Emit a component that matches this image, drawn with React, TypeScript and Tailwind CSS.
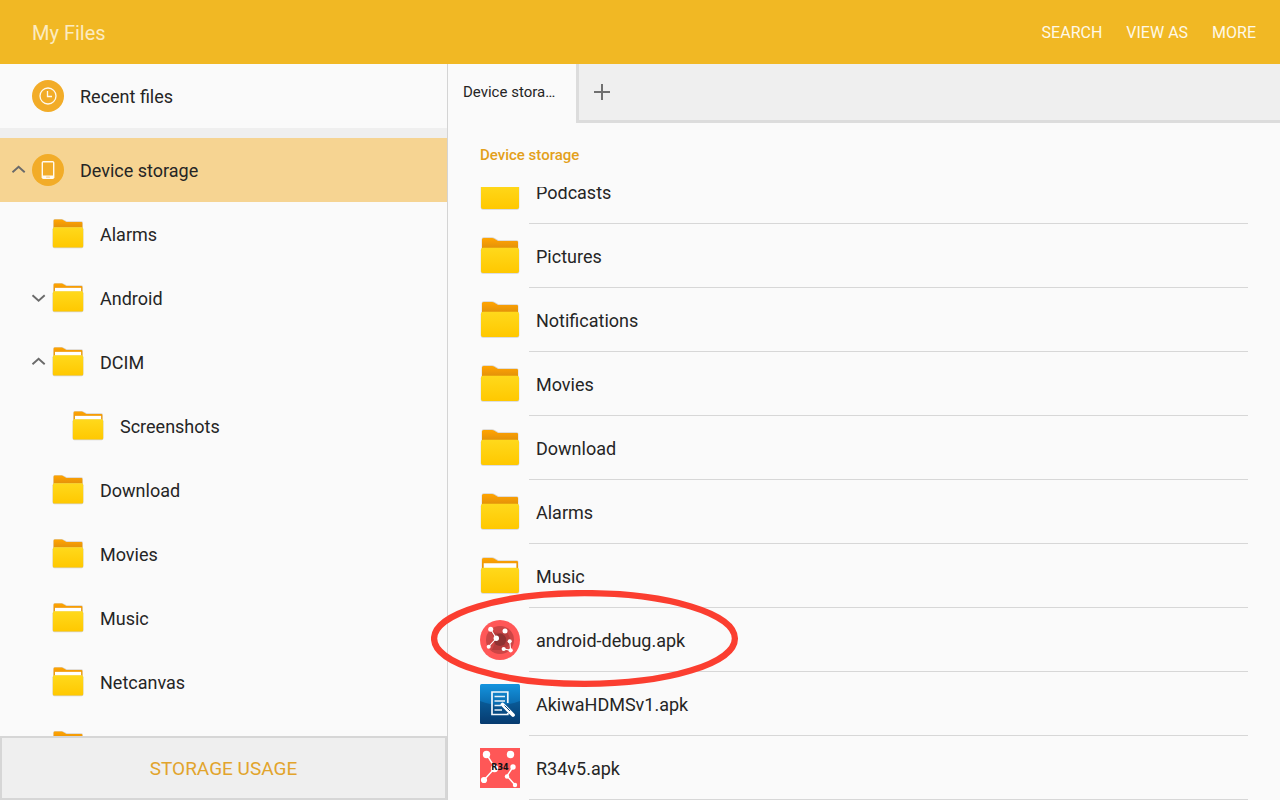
import { useLayoutEffect, useRef, type ReactNode } from "react";

type FolderKind = "plain" | "filled";

function FolderIcon({ kind, className }: { kind: FolderKind; className: string }) {
  return (
    <svg viewBox="0 0 40 40" className={className} aria-hidden="true">
      <defs>
        <linearGradient id="folderFront" x1="0" y1="0" x2="0" y2="1">
          <stop offset="0" stopColor="#ffd91c" />
          <stop offset="1" stopColor="#ffc800" />
        </linearGradient>
        <linearGradient id="folderBack" x1="0" y1="0" x2="0" y2="1">
          <stop offset="0" stopColor="#ffa500" />
          <stop offset="0.3" stopColor="#f79d04" />
          <stop offset="0.8" stopColor="#e4930a" />
        </linearGradient>
      </defs>
      <path d="M1.600 14V3.300Q1.600 1.300 3.600 1.300H12q1.500 0 2.600.8L18.500 4.200H36.800q1.600 0 1.600 1.600V14Z" fill="#d9d4cc" />
      <path d="M2 14V3.500Q2 1.900 3.600 1.900H12q1.300 0 2.300.8L18 4.900H36.800q1.200 0 1.200 1.200V14Z" fill="url(#folderBack)" />
      {kind === "filled" && <path d="M3.700 7.300H36.400V13H3.700Z" fill="#ffffff" />}
      <rect x="0.700" y="12" width="38.600" height="25.800" rx="2.200" fill="#d3d3d6" />
      <rect x="1" y="11.700" width="38" height="25.300" rx="2" fill="url(#folderFront)" />
    </svg>
  );
}

function ClockBadge() {
  return (
    <svg viewBox="0 0 32 32" className="size-8 shrink-0" fill="none" aria-hidden="true">
      <circle cx="16" cy="16" r="16" fill="#f2ac28" />
      <circle cx="16" cy="16" r="8" stroke="#fffaf0" strokeWidth="1.300" />
      <path d="M15.500 11V16.500H20" stroke="#fffaf0" strokeWidth="1.300" />
    </svg>
  );
}

function DeviceBadge() {
  return (
    <svg viewBox="0 0 32 32" className="size-8 shrink-0" aria-hidden="true">
      <circle cx="16" cy="16" r="16" fill="#f2ac28" />
      <rect x="9.600" y="7" width="12.800" height="18" rx="1.800" fill="#fffaf0" />
      <rect x="11" y="8.500" width="10" height="13" fill="#f2ac28" />
      <rect x="14" y="22.500" width="4" height="1.300" rx="0.600" fill="#f8d596" />
    </svg>
  );
}

function Chevron({ open }: { open: boolean }) {
  return (
    <svg viewBox="0 0 16 16" className="size-4" fill="none" stroke="#6a6a6a" strokeWidth="1.900" aria-hidden="true">
      <path d={open ? "M2.500 10.200 8.600 4.700 14.700 10.200" : "M2.500 5.200 8.600 10.700 14.700 5.200"} />
    </svg>
  );
}

function GraphIcon() {
  return (
    <svg viewBox="0 0 40 40" className="size-10 shrink-0" aria-hidden="true">
      <circle cx="20" cy="20" r="20" fill="#ff5757" />
      <circle cx="20" cy="20" r="14" fill="#cc4545" />
      <path d="M11 12 20 13 27 12 32 22 24 30 12 30 16 20Z" fill="#b53d3d" />
      <circle cx="20" cy="19.800" r="6.200" fill="#8e3232" />
      <path d="M10.700 9.300 16.300 18.300 8.700 26.700M29.700 21.300 30.700 30.300 23.700 29" fill="none" stroke="#ffffff" strokeWidth="1.100" />
      <g fill="#ffffff">
        <circle cx="10.700" cy="9.300" r="2.500" />
        <circle cx="25" cy="11" r="2.500" />
        <circle cx="16.300" cy="18.300" r="2.700" />
        <circle cx="8.700" cy="26.700" r="2" />
        <circle cx="29.700" cy="21.300" r="2.100" />
        <circle cx="23.700" cy="29" r="2.100" />
        <circle cx="30.700" cy="30.300" r="2.100" />
      </g>
    </svg>
  );
}

function DocumentIcon() {
  return (
    <svg viewBox="0 0 40 40" className="size-10 shrink-0" fill="none" aria-hidden="true">
      <defs>
        <linearGradient id="docBase" x1="0" y1="0" x2="0" y2="1">
          <stop offset="0" stopColor="#1494de" />
          <stop offset="0.500" stopColor="#0b6cb0" />
          <stop offset="1" stopColor="#08407a" />
        </linearGradient>
      </defs>
      <rect width="40" height="40" rx="1.500" fill="url(#docBase)" />
      <path d="M0 17Q20 25 40 17V38.500Q40 40 38.500 40H1.500Q0 40 0 38.500Z" fill="#06305c" opacity="0.350" />
      <path d="M27.800 19V8H12V30.500H27.800V29" stroke="#f2f7fb" strokeWidth="1.700" />
      <path d="M14.500 12.500H25M14.500 17H25M14.500 21.500H21M14.500 26H22" stroke="#e8f1f8" strokeWidth="1.500" />
      <path d="M22.500 20.500 33 31" stroke="#ffffff" strokeWidth="3.800" strokeLinecap="round" />
      <path d="M24.500 21.500 30 27" stroke="#0b4f87" strokeWidth="1" />
    </svg>
  );
}

function R34Icon() {
  return (
    <svg viewBox="0 0 40 40" className="size-10 shrink-0" aria-hidden="true">
      <rect width="40" height="40" fill="#ff5757" />
      <path d="M7 7 15 20 4 32M33 19 27 28 35 37" fill="none" stroke="#ffffff" strokeWidth="1.500" />
      <g fill="#ffffff">
        <circle cx="6.500" cy="6.500" r="3.700" />
        <circle cx="30.500" cy="6.500" r="3.700" />
        <circle cx="14.500" cy="20.500" r="3.700" />
        <circle cx="4" cy="32" r="3.100" />
        <circle cx="33" cy="19" r="2.700" />
        <circle cx="27" cy="28.500" r="2.200" />
        <circle cx="35" cy="37" r="2.200" />
      </g>
      <text x="20" y="22" textAnchor="middle" fontSize="8" fontWeight="700" fontFamily="DejaVu Sans, sans-serif" fill="#111111">
        R34
      </text>
    </svg>
  );
}

type TreeItem = { name: string; kind: FolderKind; depth: 1 | 2; open?: boolean };

const tree: TreeItem[] = [
  { name: "Alarms", kind: "plain", depth: 1 },
  { name: "Android", kind: "filled", depth: 1, open: false },
  { name: "DCIM", kind: "filled", depth: 1, open: true },
  { name: "Screenshots", kind: "filled", depth: 2 },
  { name: "Download", kind: "plain", depth: 1 },
  { name: "Movies", kind: "plain", depth: 1 },
  { name: "Music", kind: "filled", depth: 1 },
  { name: "Netcanvas", kind: "filled", depth: 1 },
  { name: "Notifications", kind: "plain", depth: 1 },
];

const folder = (kind: FolderKind) => <FolderIcon kind={kind} className="size-10 shrink-0" />;

const files: { name: string; icon: ReactNode }[] = [
  { name: "Podcasts", icon: folder("plain") },
  { name: "Pictures", icon: folder("plain") },
  { name: "Notifications", icon: folder("plain") },
  { name: "Movies", icon: folder("plain") },
  { name: "Download", icon: folder("plain") },
  { name: "Alarms", icon: folder("plain") },
  { name: "Music", icon: folder("filled") },
  { name: "android-debug.apk", icon: <GraphIcon /> },
  { name: "AkiwaHDMSv1.apk", icon: <DocumentIcon /> },
  { name: "R34v5.apk", icon: <R34Icon /> },
];

function Label({ children }: { children: ReactNode }) {
  return <span className="pt-0.5 pl-4">{children}</span>;
}

function Sidebar() {
  return (
    <nav aria-label="Storage" className="flex w-[35%] shrink-0 flex-col border-r border-[#d4d4d4]">
      <button className="flex h-16 shrink-0 items-center pl-8 text-left">
        <ClockBadge />
        <Label>Recent files</Label>
      </button>
      <div className="h-2.5 shrink-0 bg-[#efefef]" />
      <button aria-expanded="true" className="flex h-16 shrink-0 items-center bg-[#f6d492] text-left">
        <span className="flex w-8 justify-end pr-1.5">
          <Chevron open />
        </span>
        <DeviceBadge />
        <Label>Device storage</Label>
      </button>
      <ul className="min-h-0 flex-1 overflow-hidden">
        {tree.map((item) => (
          <li key={item.name}>
            <button
              aria-expanded={item.open}
              className={item.depth === 2 ? "flex h-16 w-full items-center pl-5 text-left" : "flex h-16 w-full items-center text-left"}
            >
              <span className="flex w-13 justify-end pr-1.5">
                {item.open !== undefined && <Chevron open={item.open} />}
              </span>
              <FolderIcon kind={item.kind} className="size-8 shrink-0" />
              <Label>{item.name}</Label>
            </button>
          </li>
        ))}
      </ul>
      <button className="h-16 shrink-0 border-2 border-[#d6d6d6] bg-[#efefef] pt-0.5 text-[19px] text-[#e2a42c]">
        STORAGE USAGE
      </button>
    </nav>
  );
}

function FileList() {
  const list = useRef<HTMLUListElement>(null);

  // The list opens scrolled to its last entry.
  useLayoutEffect(() => {
    if (list.current) list.current.scrollTop = list.current.scrollHeight;
  }, []);

  return (
    <ul ref={list} className="min-h-0 flex-1 overflow-hidden px-8">
      {files.map((file) => (
        <li key={file.name}>
          <button className="flex h-16 w-full items-center gap-[9px] text-left">
            {file.icon}
            <span className="flex h-full flex-1 items-center border-b border-[#d7d7d7] pt-[3px] pl-[7px]">{file.name}</span>
          </button>
        </li>
      ))}
    </ul>
  );
}

export default function App() {
  return (
    <div className="relative flex h-screen flex-col overflow-hidden bg-[#fafafa] font-['Roboto',sans-serif] text-lg text-[#252525]">
      <header className="flex h-16 shrink-0 items-center justify-between bg-[#f1b824] pt-0.5 pr-6 pl-8">
        <h1 className="text-xl text-[#fcebc0]">My Files</h1>
        <div className="flex gap-6 text-base text-[#fef8e8]">
          <button>SEARCH</button>
          <button>VIEW AS</button>
          <button>MORE</button>
        </div>
      </header>
      <div className="flex min-h-0 flex-1">
        <Sidebar />
        <main className="flex min-w-0 flex-1 flex-col">
          <div className="flex h-[59px] shrink-0">
            <button className="w-32 truncate px-[15px] pb-0.5 text-left text-[15px]">Device storage</button>
            <div className="flex flex-1 items-center border-b-3 border-l-3 border-[#dcdcdc] bg-[#efefef] pl-[15px]">
              <button aria-label="Add tab">
                <svg viewBox="0 0 16 16" className="size-4" stroke="#707070" strokeWidth="2" aria-hidden="true">
                  <path d="M8 0V16M0 8H16" />
                </svg>
              </button>
            </div>
          </div>
          <h2 className="h-16 shrink-0 px-8 pt-[21px] text-[15px] leading-[22px] font-medium text-[#e3a01b]">Device storage</h2>
          <FileList />
        </main>
      </div>
      <svg
        viewBox="0 0 308 98"
        className="pointer-events-none absolute top-[590px] left-[431px] w-[308px]"
        fill="none"
        stroke="#fb3e30"
        strokeWidth="6.300"
        aria-hidden="true"
      >
        <ellipse cx="153.500" cy="48.500" rx="150.400" ry="45.400" />
      </svg>
    </div>
  );
}
